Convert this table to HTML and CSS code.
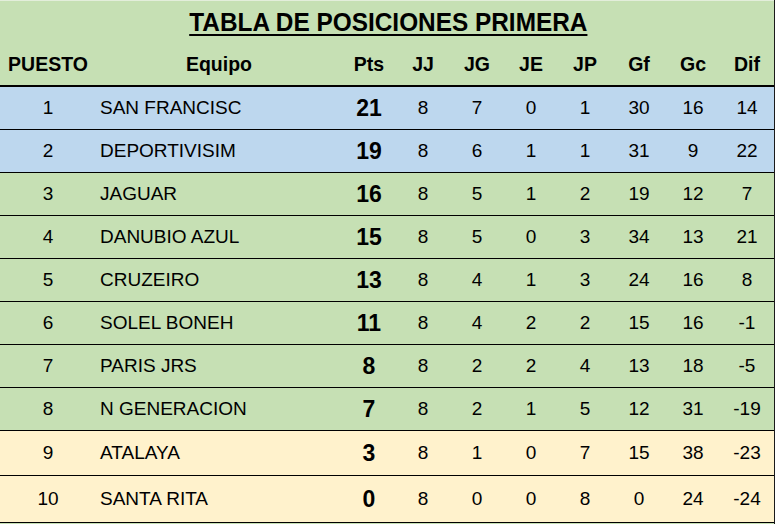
FILE: index.html
```html
<!DOCTYPE html>
<html lang="es">
<head>
<meta charset="utf-8">
<title>Tabla de posiciones</title>
<link rel="stylesheet" href="styles.css">
</head>
<body>
<div class="sheet">
  <div class="title"><span class="title-text">TABLA DE POSICIONES PRIMERA</span></div>
  <table class="standings">
    <colgroup>
      <col class="c-pos"><col class="c-team"><col class="c-num"><col class="c-num"><col class="c-num"><col class="c-num"><col class="c-num"><col class="c-num"><col class="c-num"><col class="c-num">
    </colgroup>
    <thead>
      <tr class="head">
        <th>PUESTO</th><th>Equipo</th><th>Pts</th><th>JJ</th><th>JG</th><th>JE</th><th>JP</th><th>Gf</th><th>Gc</th><th>Dif</th>
      </tr>
    </thead>
    <tbody>
      <tr class="blue"><td>1</td><td class="team">SAN FRANCISC</td><td class="pts">21</td><td>8</td><td>7</td><td>0</td><td>1</td><td>30</td><td>16</td><td>14</td></tr>
      <tr class="blue"><td>2</td><td class="team">DEPORTIVISIM</td><td class="pts">19</td><td>8</td><td>6</td><td>1</td><td>1</td><td>31</td><td>9</td><td>22</td></tr>
      <tr class="green"><td>3</td><td class="team">JAGUAR</td><td class="pts">16</td><td>8</td><td>5</td><td>1</td><td>2</td><td>19</td><td>12</td><td>7</td></tr>
      <tr class="green"><td>4</td><td class="team">DANUBIO AZUL</td><td class="pts">15</td><td>8</td><td>5</td><td>0</td><td>3</td><td>34</td><td>13</td><td>21</td></tr>
      <tr class="green"><td>5</td><td class="team">CRUZEIRO</td><td class="pts">13</td><td>8</td><td>4</td><td>1</td><td>3</td><td>24</td><td>16</td><td>8</td></tr>
      <tr class="green"><td>6</td><td class="team">SOLEL BONEH</td><td class="pts">11</td><td>8</td><td>4</td><td>2</td><td>2</td><td>15</td><td>16</td><td>-1</td></tr>
      <tr class="green"><td>7</td><td class="team">PARIS JRS</td><td class="pts">8</td><td>8</td><td>2</td><td>2</td><td>4</td><td>13</td><td>18</td><td>-5</td></tr>
      <tr class="green"><td>8</td><td class="team">N GENERACION</td><td class="pts">7</td><td>8</td><td>2</td><td>1</td><td>5</td><td>12</td><td>31</td><td>-19</td></tr>
      <tr class="yellow r9"><td>9</td><td class="team">ATALAYA</td><td class="pts">3</td><td>8</td><td>1</td><td>0</td><td>7</td><td>15</td><td>38</td><td>-23</td></tr>
      <tr class="yellow r10"><td>10</td><td class="team">SANTA RITA</td><td class="pts">0</td><td>8</td><td>0</td><td>0</td><td>8</td><td>0</td><td>24</td><td>-24</td></tr>
    </tbody>
  </table>
</div>
</body>
</html>
```

FILE: styles.css
```css
html, body {
  margin: 0;
  padding: 0;
  background: #ffffff;
}

.sheet {
  width: 774px;
  height: 524px;
  background: #c6e0b4;
  border-right: 1px solid #1a1a1a;
  font-family: "Liberation Sans", Arial, sans-serif;
  color: #000;
  overflow: hidden;
}

.title {
  height: 44px;
  display: flex;
  justify-content: center;
  align-items: center;
  border-top: 1px solid #e3eedb;
  box-sizing: border-box;
}

.title-text {
  display: inline-block;
  font-size: 26.5px;
  font-weight: bold;
  text-decoration: underline;
  text-decoration-thickness: 2px;
  text-underline-offset: 3px;
  transform: scaleX(0.92);
  padding-left: 3px;
}

.standings {
  width: 774px;
  border-collapse: collapse;
  table-layout: fixed;
}

.c-pos { width: 96px; }
.c-team { width: 246px; }
.c-num { width: 54px; }

.standings th,
.standings td {
  padding: 0;
  text-align: center;
  vertical-align: middle;
}

.head th {
  height: 41px;
  font-size: 19.5px;
  font-weight: bold;
  border-bottom: 2px solid #000;
}

.standings td {
  height: 42px;
  font-size: 19px;
  border-bottom: 1px solid #000;
}

.standings td.team {
  text-align: left;
  padding-left: 4px;
}

.standings td.pts {
  font-size: 23px;
  font-weight: bold;
}

.blue { background: #bdd7ee; }
.green { background: #c6e0b4; }
.yellow { background: #fff2cc; }

.r9 td { height: 44px; }
.r10 td { height: 46px; }
```
